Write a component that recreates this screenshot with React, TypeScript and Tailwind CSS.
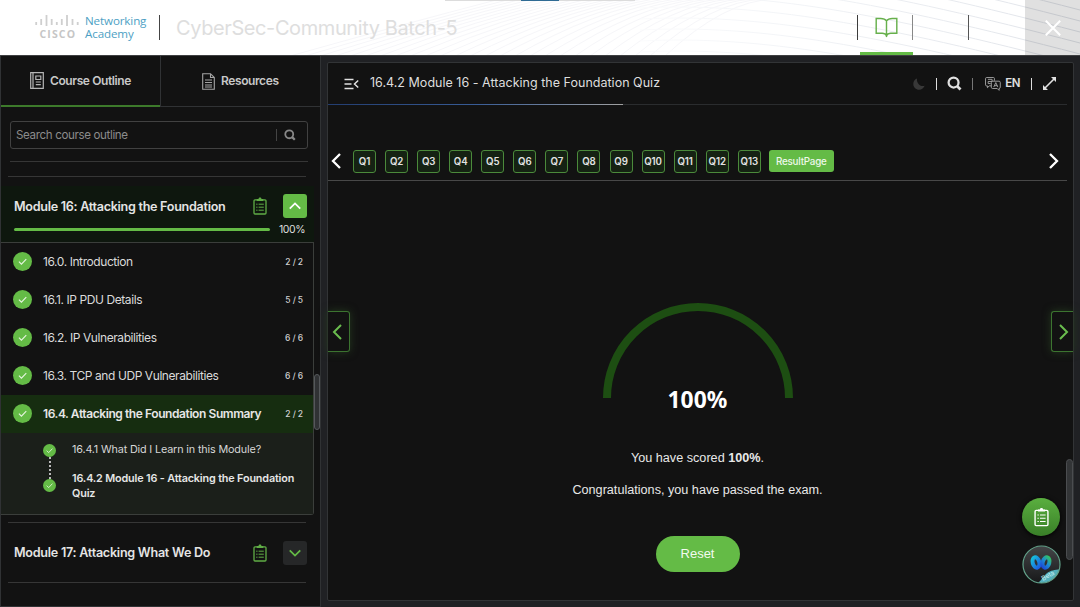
import type { ReactNode } from "react";

type Section = { title: string; count: string; active?: boolean };

const sections: Section[] = [
  { title: "16.0. Introduction", count: "2 / 2" },
  { title: "16.1. IP PDU Details", count: "5 / 5" },
  { title: "16.2. IP Vulnerabilities", count: "6 / 6" },
  { title: "16.3. TCP and UDP Vulnerabilities", count: "6 / 6" },
  { title: "16.4. Attacking the Foundation Summary", count: "2 / 2", active: true },
];

const questions = Array.from({ length: 13 }, (_, i) => `Q${i + 1}`);

function Waves() {
  const lines = Array.from({ length: 26 }, (_, i) => i);
  return (
    <svg className="absolute inset-0 h-[55px] w-full" viewBox="0 0 1080 55" fill="none">
      <defs>
        <linearGradient id="fade" x1="600" y1="0" x2="1080" y2="0" gradientUnits="userSpaceOnUse">
          <stop stopColor="#fdfdfe" />
          <stop offset="0.4" stopColor="#f2f4f7" />
          <stop offset="1" stopColor="#dfe2e8" />
        </linearGradient>
      </defs>
      {lines.map((i) => (
        <path
          key={`a${i}`}
          d={`M${290 + i * 15} 56 Q${400 + i * 13} ${25 - i} ${500 + i * 11} -1`}
          stroke="#f6f6f9"
        />
      ))}
      {lines.slice(0, 18).map((i) => (
        <path
          key={`b${i}`}
          d={`M640 ${i * 11 - 124} C760 ${i * 11 - 130} 880 ${i * 11 - 108} 1080 ${i * 11 - 56}`}
          stroke="url(#fade)"
        />
      ))}
    </svg>
  );
}

function Check({ small }: { small?: boolean }) {
  return (
    <span
      className={
        small
          ? "flex size-[13px] shrink-0 items-center justify-center rounded-full bg-[#64bb46]"
          : "flex size-[19px] shrink-0 items-center justify-center rounded-full bg-[#64bb46]"
      }
    >
      <svg className={small ? "size-[7px]" : "size-[9px]"} viewBox="0 0 10 10" fill="none">
        <path d="M1 5.2 3.8 8 9.2 2.3" stroke="#e7f6e1" strokeWidth="1.2" />
      </svg>
    </span>
  );
}

function Clipboard({ className }: { className: string }) {
  return (
    <svg className={className} viewBox="0 0 14 18" fill="none" stroke="currentColor">
      <rect x="1" y="2.8" width="12" height="14.2" rx="1" strokeWidth="1.3" />
      <path d="M3.7 1.9h1.8C5.7.9 6.2.5 7 .5s1.3.4 1.5 1.4h1.8v2H3.7z" fill="currentColor" stroke="none" />
      <path d="M3.2 7.2h1.3M5.6 7.2h5.2M3.2 10.2h1.3M5.6 10.2h5.2M3.2 13.2h1.3M5.6 13.2h5.2" />
    </svg>
  );
}

function Chevron({ d, className }: { d: string; className: string }) {
  return (
    <svg className={className} viewBox="0 0 16 16" fill="none" stroke="currentColor">
      <path d={d} />
    </svg>
  );
}

function Search({ className }: { className: string }) {
  return (
    <svg className={className} viewBox="0 0 16 16" fill="none" stroke="currentColor" strokeWidth="2.4">
      <circle cx="7" cy="7" r="5.3" />
      <path d="m10.8 10.8 3.6 3.6" strokeWidth="3" />
    </svg>
  );
}

function Header() {
  return (
    <header className="relative h-[55px] bg-white">
      <Waves />
      <div className="absolute top-0 left-[445px] flex h-px w-[190px] justify-center bg-[#dcdcdc]">
        <div className="h-px w-[38px] bg-[#2f6b94]" />
      </div>
      <div className="relative flex h-full items-center">
        <svg className="ml-[35px] h-7 w-[45px]" viewBox="0 0 45 28" fill="none">
          <path
            d="M1.2 8v3M6.2 5v6M11.5 1v11M16.7 5v6M21.8 8v3M26.8 5v6M32 1v11M37.5 5v6M42.7 8v3"
            stroke="#cfcfcf"
            strokeWidth="1.8"
          />
          <text x="4.500" y="23.500" fill="#c6c6c6" fontSize="10.5" fontWeight="700" fontFamily="Open Sans, sans-serif" textLength="35.5">
            CISCO
          </text>
        </svg>
        <div className="mt-[-1px] ml-[5px] w-[74px] font-['Open_Sans',sans-serif] text-[11.6px] leading-[13px] tracking-[-0.12px] text-[#4d9fc4]">
          Networking
          <br />
          Academy
        </div>
        <div className="h-[25px] w-px bg-[#444]" />
        <div className="ml-4 w-[300px] font-['Inter',sans-serif] text-[20px] tracking-[-0.4px] whitespace-nowrap text-[#dedede]">
          CyberSec-Community Batch-5
        </div>
        <div className="ml-auto h-[25px] w-px bg-[#3c3c3c]" />
        <div className="ml-[2px] flex h-[55px] w-[53px] items-center justify-center border-b-[3px] border-[#64bb46]">
          <svg className="mt-[3px] h-[21px] w-[23px]" viewBox="0 0 24 22" fill="none" stroke="#67b04c" strokeWidth="1.5">
            <path d="M12 4C10.5 2 8.500 1.500 6 1.500H1.200v15.500H7.500c2.200 0 3.700.700 4.500 2.500.800-1.800 2.300-2.500 4.500-2.500h6.300V1.500H18c-2.500 0-4.500.500-6 2.500v17" />
          </svg>
        </div>
        <div className="-ml-px h-[25px] w-px bg-[#888]" />
        <div className="ml-[55px] h-[25px] w-px bg-[#555]" />
        <button className="ml-[56px] flex h-[55px] w-[55px] items-center justify-center bg-black/12 text-white">
          <svg className="size-4" viewBox="0 0 16 16" fill="none" stroke="currentColor" strokeWidth="2">
            <path d="m.8.800 14.400 14.400M15.200.800.800 15.200" />
          </svg>
        </button>
      </div>
    </header>
  );
}

function ModuleTitle({ children, open }: { children: ReactNode; open?: boolean }) {
  return (
    <div className="flex items-center pl-[13px]">
      <h3
        className={
          open
            ? "w-[238px] pt-[2px] text-[12.6px] font-semibold tracking-[-0.29px] whitespace-nowrap text-[#e4e4e4]"
            : "w-[238px] pt-px text-[12.6px] font-semibold tracking-[-0.26px] whitespace-nowrap text-[#e4e4e4]"
        }
      >
        {children}
      </h3>
      <Clipboard className="ml-px h-[18px] w-[14px] text-[#60ad46]" />
      <button
        className={
          open
            ? "ml-[16px] flex size-6 items-center justify-center rounded-[3px] bg-[#64bb46] text-white"
            : "ml-[16px] flex size-6 items-center justify-center rounded-[3px] bg-[#262728] text-[#64bb46]"
        }
      >
        <Chevron d={open ? "M2 11l6-6 6 6" : "M2 5l6 6 6-6"} className="size-[14px] stroke-[2]" />
      </button>
    </div>
  );
}

function Sidebar() {
  return (
    <aside className="relative flex h-[551px] w-[321px] flex-col border-r border-b border-l border-[#303234] bg-[#121212]">
      <div className="flex h-[51px] border-b border-[#303234] text-[12px] font-semibold tracking-[-0.4px] text-[#c8c8c8]">
        <div className="flex h-[51px] w-[159px] items-center border-b-2 border-[#3d7a2b] pl-[29px]">
          <svg className="mr-[6px] h-[17px] w-[14px] text-[#b5b5b5]" viewBox="0 0 14 17" fill="none" stroke="currentColor" strokeWidth="1.2">
            <path d="M.7.700h12.600v15.600H.7zM3 .700v15.600M5.800 4h5v3.500h-5zM5.800 10h5M5.800 12.700h5" />
          </svg>
          <span>Course Outline</span>
        </div>
        <div className="flex h-[50px] flex-1 items-center border-l border-[#303234] pl-[41px]">
          <svg className="mr-[6px] h-[17px] w-[13px] text-[#a5a5a5]" viewBox="0 0 13 17" fill="none" stroke="currentColor" strokeWidth="1.1">
            <path d="M.7.700h7.800l3.800 3.800v11.800H.7zM8.500.700v3.800h3.800M3 7h7M3 9.500h7M3 12h7M3 14h7" />
          </svg>
          Resources
        </div>
      </div>

      <div className="mt-[14px] ml-[9px] flex h-7 w-[298px] items-center rounded-[3px] border border-[#414141] pl-[5px] text-[11.6px] tracking-[-0.37px] text-[#8b8b8b]">
        <span className="pt-[2px]">Search course outline</span>
        <span className="mr-[7px] ml-auto h-3 w-px bg-[#444]" />
        <Search className="mr-[11px] size-3 text-[#888]" />
      </div>
      <div className="mt-[12px] ml-[9px] h-px w-[298px] bg-[#363636]" />
      <div className="mt-[14px] ml-[7px] h-px w-[298px] bg-[#363636]" />

      <section className="mt-[9px] h-[56px] w-[313px] bg-[#0e170e] pt-2">
        <ModuleTitle open>Module 16: Attacking the Foundation</ModuleTitle>
        <div className="mt-[3px] flex h-[16px] items-center pl-[13px] text-[10.5px] leading-4 tracking-[-0.4px] text-[#ddd]">
          <div className="mr-[9px] h-[3px] w-[256px] rounded-full bg-[#64bb46]" />
          <span className="pt-px">100%</span>
        </div>
      </section>

      <div className="h-[273px] w-[313px] rounded-br-[3px] border-t border-r border-b border-[#3b3e3b]">
        {sections.map((s) => (
          <div
            key={s.title}
            className={
              s.active
                ? "flex h-[38px] items-center bg-[#162d10] pr-[10px] pb-px pl-[11.5px] text-[12px] font-semibold tracking-[-0.42px] text-[#e6e6e6]"
                : "flex h-[38px] items-center pr-[10px] pb-px pl-[11.5px] text-[12px] tracking-[-0.42px] text-[#dadada]"
            }
          >
            <Check />
            <span className="ml-[11.500px] pt-px whitespace-nowrap">{s.title}</span>
            <span className="ml-auto pt-[2px] text-[8.5px] font-medium tracking-[-0.1px] whitespace-nowrap text-[#d0d0d0]">
              {s.count}
            </span>
          </div>
        ))}
        <div className="flex h-[81px] bg-[#1b1f1a] pl-[42px]">
          <div className="flex flex-col items-center pt-[11px]">
            <Check small />
            <div className="h-[22px] border-l-2 border-dotted border-[#bbb]" />
            <Check small />
          </div>
          <div className="pt-[9px] pl-[16px] text-[10.8px] leading-[15px] tracking-[-0.15px] whitespace-nowrap text-[#d6d6d6]">
            <p>16.4.1 What Did I Learn in this Module?</p>
            <p className="mt-[14px] font-semibold text-[#e6e6e6]">
              16.4.2 Module 16 - Attacking the Foundation
              <br />
              Quiz
            </p>
          </div>
        </div>
      </div>

      <div className="mt-[7px] ml-[7px] h-px w-[298px] bg-[#363636]" />
      <div className="mt-[18px]">
        <ModuleTitle>Module 17: Attacking What We Do</ModuleTitle>
      </div>
      <div className="mt-[17px] ml-[7px] h-px w-[298px] bg-[#363636]" />
      <div className="absolute top-[318px] right-0 h-[56px] w-[6px] rounded-full border border-[#55585b] bg-[#303234]" />
    </aside>
  );
}

function Toolbar() {
  return (
    <div className="flex h-[41px] items-center pl-4 text-[#e0e0e0]">
      <svg className="h-[12px] w-[15px]" viewBox="0 0 15 12" fill="none" stroke="currentColor" strokeWidth="1.5">
        <path d="M.5 1.500h9M.5 6h7M.5 10.500h9M14.200 2.500 10.500 6l3.700 3.500" />
      </svg>
      <span className="ml-[11px] text-[12.5px] tracking-[0.02px] text-[#dedede]">
        16.4.2 Module 16 - Attacking the Foundation Quiz
      </span>
      <svg className="mt-px ml-auto size-3 text-[#383838]" viewBox="0 0 12 12" fill="currentColor">
        <path d="M4 .5C1.800 1.300.300 3.400.300 5.900c0 3.200 2.600 5.800 5.800 5.800 2.600 0 4.800-1.700 5.500-4-1.300.4-2.900.5-4.300-.3C5 6.200 3.500 3.500 4 .5" />
      </svg>
      <div className="ml-[11px] h-3 w-px bg-[#ddd]" />
      <Search className="ml-[10px] size-[15px]" />
      <div className="ml-[10px] h-3 w-px bg-[#777]" />
      <svg className="ml-[12px] h-[14px] w-4" viewBox="0 0 17 15" fill="none" stroke="#a4a4a4">
        <path d="M6.500 9.500H4.500L2.500 11.500v-2h-1C1 9.500.5 9 .5 8.500V2C.5 1 1 .500 1.500.500H9c.6 0 1 .500 1 1v2.500M8.500 4.500h6.500c.8 0 1.300.500 1.300 1.300V11c0 .800-.5 1.300-1.300 1.300v2l-2-2H8c-.8 0-1.300-.5-1.300-1.300V6c0-1 .5-1.500 1.800-1.500" />
        <path d="M3 2.500h4.500v2.300H3.300V7H6M9.300 10.800l2.200-4.800 2.200 4.800M10 9.300h3" />
      </svg>
      <span className="ml-[4px] text-[11.5px] font-semibold tracking-[-0.5px]">EN</span>
      <div className="ml-[11px] h-3 w-px bg-[#ddd]" />
      <svg className="mr-[17px] ml-[11px] size-[13px]" viewBox="0 0 13 13" fill="currentColor">
        <path d="M8 0H13v5zM0 8V13h5z" />
        <path d="M2 11 11 2" stroke="currentColor" strokeWidth="1.600" />
      </svg>
    </div>
  );
}

function QuestionNav() {
  return (
    <nav className="flex h-[38px] w-[739px] items-center border-b border-[#484848] pb-px">
      <Chevron d="M12 1 5 8l7 7" className="size-[16px] stroke-[2.300] text-white" />
      <div className="ml-[9px] flex gap-[9.07px]">
        {questions.map((q) => (
          <button
            key={q}
            className="flex h-[23px] w-[23px] items-center justify-center rounded-[3px] border border-[#4b8a3b] bg-[#152213] pt-[2px] text-[9.7px] font-semibold tracking-[-0.1px] text-[#e2e2e2]"
          >
            {q}
          </button>
        ))}
      </div>
      <button className="ml-[8px] h-[22px] w-[65px] rounded-[3px] bg-[#64bb46] pt-[2px] text-[9.8px] font-medium tracking-[-0.2px] text-[#eef8ea]">
        ResultPage
      </button>
      <Chevron d="m4 1 7 7-7 7" className="mr-[5px] ml-auto size-[16px] stroke-[2.300] text-white" />
    </nav>
  );
}

function Result() {
  return (
    <div className="flex w-[739px] flex-col items-center font-['Liberation_Sans',sans-serif] text-[12.65px] text-[#e8e8e8]">
      <div className="relative mt-[122px] h-[111px]">
        <svg className="h-[95px] w-[190px]" viewBox="0 0 190 95" fill="none">
          <path d="M4 95a91 91 0 0 1 182 0" stroke="#1d4e12" strokeWidth="8" />
        </svg>
        <div className="absolute inset-x-0 top-[80px] text-center font-['Noto_Sans',sans-serif] text-[24px] leading-8 font-bold text-white">
          <span className="inline-block scale-x-95">100%</span>
        </div>
      </div>
      <p className="mt-[36px] leading-4">
        You have scored <b>100%</b>.
      </p>
      <p className="mt-[16px] leading-4">Congratulations, you have passed the exam.</p>
      <button className="mt-[38px] h-9 w-[84px] rounded-full bg-[#64bb46] text-[13px] text-[#f2faef]">Reset</button>
    </div>
  );
}

function WebexBadge() {
  return (
    <svg className="size-[39px]" viewBox="0 0 39 39" fill="none">
      <defs>
        <linearGradient id="left" x1="10" y1="12" x2="19" y2="24" gradientUnits="userSpaceOnUse">
          <stop stopColor="#16c6dd" />
          <stop offset="1" stopColor="#1d48e0" />
        </linearGradient>
        <linearGradient id="right" x1="28" y1="11" x2="20" y2="24" gradientUnits="userSpaceOnUse">
          <stop stopColor="#39d34a" />
          <stop offset="0.500" stopColor="#1b8bd0" />
          <stop offset="1" stopColor="#1c39d8" />
        </linearGradient>
        <linearGradient id="face" x1="0" y1="0" x2="0" y2="39" gradientUnits="userSpaceOnUse">
          <stop stopColor="#454749" />
          <stop offset="1" stopColor="#161718" />
        </linearGradient>
        <clipPath id="disc">
          <circle cx="19.500" cy="19.500" r="18.500" />
        </clipPath>
      </defs>
      <circle cx="19.500" cy="19.500" r="18.300" fill="url(#face)" />
      <ellipse cx="14" cy="17.500" rx="3.300" ry="5.300" transform="rotate(-16 14 17.500)" stroke="url(#left)" strokeWidth="4" />
      <ellipse cx="24" cy="17.500" rx="3.300" ry="5.300" transform="rotate(16 24 17.500)" stroke="url(#right)" strokeWidth="4" />
      <g clipPath="url(#disc)">
        <path d="M13 40c6-3 8-9 12-12s8-3 14-4v16z" fill="#53aebb" />
        <text x="21" y="36" transform="rotate(-30 21 36)" fill="#c9eef2" fontSize="6.500" fontFamily="Inter, sans-serif">
          Beta
        </text>
      </g>
      <circle cx="19.500" cy="19.500" r="18.500" stroke="#64a38b" strokeWidth="1.200" />
    </svg>
  );
}

export default function App() {
  return (
    <div className="h-[607px] w-[1080px] overflow-hidden bg-[#202124] font-['Inter',sans-serif]">
      <Header />
      <div className="flex h-[552px] border-t border-[#3f4042]">
        <Sidebar />
        <main className="relative mt-[6px] ml-[6px] h-[539px] w-[747px] rounded-[2px] border border-[#323436] bg-[#121212]">
          <Toolbar />
          <div className="h-px w-[739px] bg-[#2a2c2e]">
            <div className="h-px w-[295px] bg-linear-to-r from-[#233d70] via-[#385c96] to-[#a0a0a0]" />
          </div>
          <div className="h-[38px]" />
          <QuestionNav />
          <Result />

          <button className="absolute top-[248px] left-0 flex h-[41px] w-[22px] items-center justify-center rounded-r-[3px] border border-l-0 border-[#3c7430] text-[#6abd4e] shadow-[0_0_9px_#24381f]">
            <Chevron d="M12 1 5 8l7 7" className="mr-[3px] size-[16px] stroke-[2]" />
          </button>
          <button className="absolute top-[248px] right-0 flex h-[41px] w-[22px] items-center justify-center rounded-l-[3px] border border-r-0 border-[#3c7430] text-[#6abd4e] shadow-[0_0_9px_#24381f]">
            <Chevron d="m4 1 7 7-7 7" className="ml-[3px] size-[16px] stroke-[2]" />
          </button>

          <div className="absolute right-0 bottom-[40px] h-[101px] w-[7px] rounded-full border border-[#4b4d50] bg-[#333537]" />
          <div className="absolute right-[12px] bottom-[16px] flex flex-col items-center gap-[9px]">
            <button className="mr-px flex size-[38px] items-center justify-center rounded-full bg-linear-to-b from-[#5aaf3f] to-[#397f28] text-white shadow-[0_1px_5px_#000]">
              <Clipboard className="h-[20px] w-[15px]" />
            </button>
            <WebexBadge />
          </div>
        </main>
      </div>
    </div>
  );
}
